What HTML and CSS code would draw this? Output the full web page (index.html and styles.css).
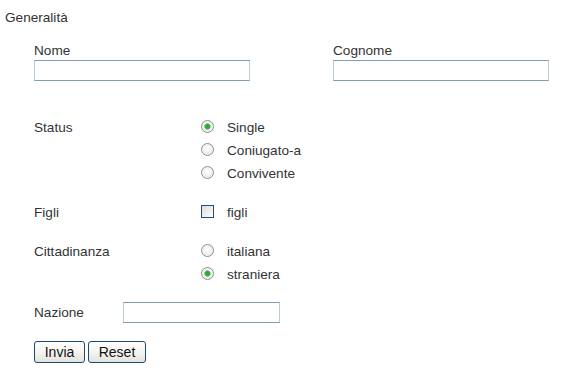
FILE: index.html
```html
<!DOCTYPE html>
<html lang="it">
<head>
<meta charset="utf-8">
<title>Generalità</title>
<link rel="stylesheet" href="styles.css">
</head>
<body>
<form class="form">
  <div class="title">Generalità</div>

  <div class="names">
    <div class="field">
      <label class="lbl" for="nome">Nome</label>
      <input class="text wide" id="nome" type="text">
    </div>
    <div class="field">
      <label class="lbl" for="cognome">Cognome</label>
      <input class="text wide" id="cognome" type="text">
    </div>
  </div>

  <div class="row status">
    <div class="rlabel">Status</div>
    <div class="opts">
      <label class="opt"><input class="radio" type="radio" name="status" checked><span>Single</span></label>
      <label class="opt"><input class="radio" type="radio" name="status"><span>Coniugato-a</span></label>
      <label class="opt"><input class="radio" type="radio" name="status"><span>Convivente</span></label>
    </div>
  </div>

  <div class="row figli">
    <div class="rlabel">Figli</div>
    <div class="opts">
      <label class="opt"><input class="check" type="checkbox"><span>figli</span></label>
    </div>
  </div>

  <div class="row citt">
    <div class="rlabel">Cittadinanza</div>
    <div class="opts">
      <label class="opt"><input class="radio" type="radio" name="citt"><span>italiana</span></label>
      <label class="opt"><input class="radio" type="radio" name="citt" checked><span>straniera</span></label>
    </div>
  </div>

  <div class="nazione">
    <label class="nlabel" for="naz">Nazione</label>
    <input class="text short" id="naz" type="text">
  </div>

  <div class="buttons">
    <button class="btn invia" type="button">Invia</button>
    <button class="btn reset" type="button">Reset</button>
  </div>
</form>
</body>
</html>
```

FILE: styles.css
```css
html, body {
  margin: 0;
  padding: 0;
  background: #ffffff;
}

body {
  font-family: "Liberation Sans", Arial, sans-serif;
  font-size: 13.6px;
  color: #333333;
}

.form {
  margin: 0;
}

.title {
  padding: 10px 0 0 5px;
  line-height: 15px;
}

.names {
  display: grid;
  grid-template-columns: 299px 216px;
  padding-left: 34px;
  margin-top: 18px;
}

.field {
  display: flex;
  flex-direction: column;
  align-items: flex-start;
}

.lbl {
  line-height: 15px;
  height: 15px;
  margin-bottom: 2px;
}

.text {
  box-sizing: border-box;
  height: 21px;
  margin: 0;
  padding: 1px 3px;
  border: 1px solid #7f9db9;
  border-left-color: #b8c9da;
  border-right-color: #b8c9da;
  background: #ffffff;
  font: inherit;
  outline: none;
}

.wide {
  width: 216px;
}

.short {
  width: 157px;
}

.row {
  display: grid;
  grid-template-columns: 167px 1fr;
  padding-left: 34px;
}

.status {
  margin-top: 35px;
}

.figli {
  margin-top: 16px;
}

.citt {
  margin-top: 16px;
}

.rlabel {
  line-height: 23px;
  height: 23px;
}

.opts {
  display: flex;
  flex-direction: column;
}

.opt {
  display: flex;
  align-items: center;
  height: 23px;
  line-height: 23px;
}

.radio {
  -webkit-appearance: none;
  appearance: none;
  box-sizing: border-box;
  width: 13px;
  height: 13px;
  margin: -3px 13px 0 0;
  border-radius: 50%;
  border: 1px solid #8c8f94;
  background: radial-gradient(circle at 50% 40%, #ffffff 0%, #f2f2f2 45%, #d8d8d8 100%);
  box-shadow: inset 0 0 0 1px #f4f4f4;
  flex: none;
}

.radio:checked {
  background:
    radial-gradient(circle at 50% 50%, #2fb12f 0, #2fa62f 2px, #8fd08f 3px, rgba(255,255,255,0) 3.6px),
    radial-gradient(circle at 50% 40%, #ffffff 0%, #f2f2f2 45%, #d8d8d8 100%);
}

.check {
  -webkit-appearance: none;
  appearance: none;
  box-sizing: border-box;
  width: 13px;
  height: 13px;
  margin: -3px 13px 0 0;
  border: 1px solid #1f4e7c;
  background: linear-gradient(135deg, #dcdcdc 0%, #f0f0f0 60%, #ffffff 100%);
  flex: none;
}

.nazione {
  display: grid;
  grid-template-columns: 89px 157px;
  align-items: center;
  padding-left: 34px;
  margin-top: 16px;
  height: 21px;
}

.nlabel {
  line-height: 15px;
}

.buttons {
  display: flex;
  gap: 3px;
  padding-left: 34px;
  margin-top: 18px;
}

.btn {
  box-sizing: border-box;
  height: 22px;
  margin: 0;
  padding: 0;
  border: 1px solid #1d4a74;
  border-radius: 3px;
  background: linear-gradient(#ffffff 0%, #f4f4f2 50%, #e2e2de 100%);
  font: inherit;
  font-size: 14px;
  color: #111111;
  line-height: 20px;
}

.invia {
  width: 51px;
}

.reset {
  width: 58px;
}
```
